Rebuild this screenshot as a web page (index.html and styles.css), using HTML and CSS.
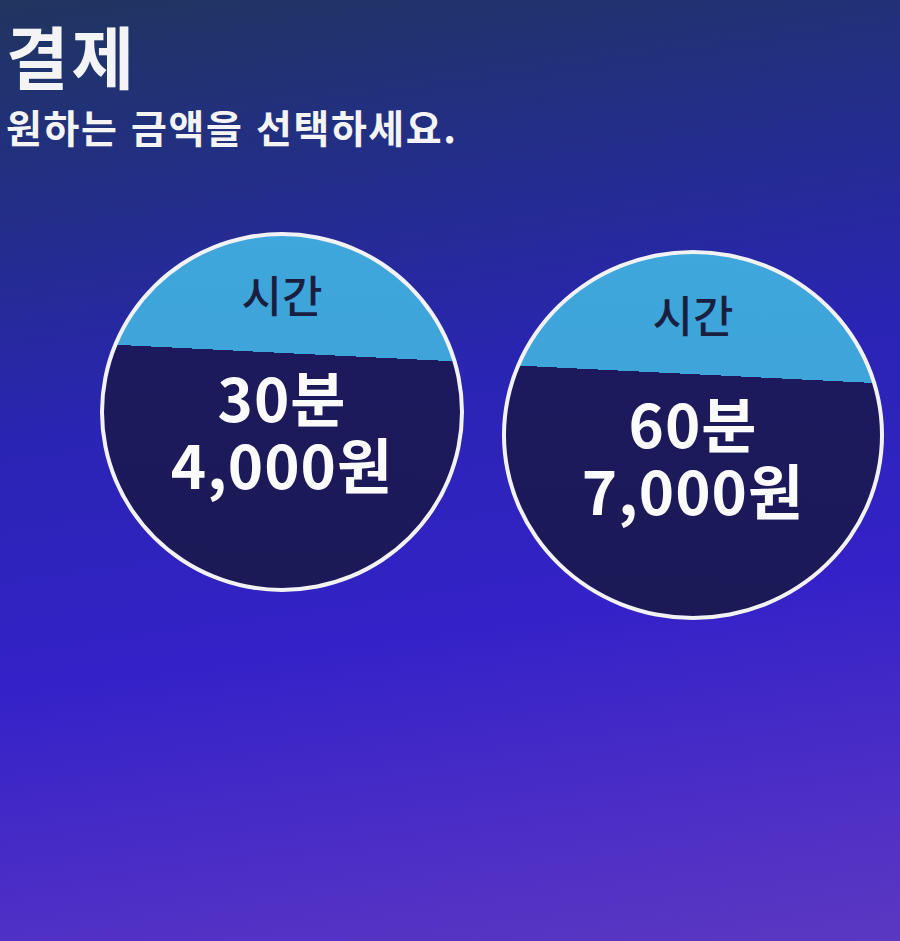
FILE: index.html
```html
<!DOCTYPE html>
<html lang="ko">
<head>
<meta charset="utf-8">
<title>결제</title>
<link rel="stylesheet" href="styles.css">
</head>
<body>
<main class="screen">
  <header class="head">
    <h1 class="title">결제</h1>
    <p class="subtitle">원하는 금액을 선택하세요.</p>
  </header>
  <section class="options">
    <button class="option option--a" type="button">
      <span class="option-top">시간</span>
      <span class="option-body">
        <span class="option-line">30분</span>
        <span class="option-line">4,000원</span>
      </span>
    </button>
    <button class="option option--b" type="button">
      <span class="option-top">시간</span>
      <span class="option-body">
        <span class="option-line">60분</span>
        <span class="option-line">7,000원</span>
      </span>
    </button>
  </section>
</main>
</body>
</html>
```
FILE: styles.css
```css
html, body {
  margin: 0;
  padding: 0;
  height: 100%;
}
body {
  font-family: "Noto Sans CJK KR", "Noto Sans", sans-serif;
  background: linear-gradient(172deg, #20355f 0%, #222f84 18%, #2a24b4 42%, #3422c8 65%, #4d2ec6 85%, #5b38c2 100%);
  color: #fff;
  overflow: hidden;
}
.screen {
  height: 941px;
  display: flex;
  flex-direction: column;
}
.head {
  padding: 10px 0 0 6px;
}
.title {
  margin: 0;
  font-size: 68px;
  font-weight: 700;
  line-height: 90px;
  letter-spacing: 3px;
  color: #f4f4f6;
}
.subtitle {
  margin: 0;
  font-size: 39px;
  font-weight: 700;
  line-height: 52px;
  color: #f4f4f6;
  letter-spacing: 1.6px;
}
.options {
  display: flex;
  align-items: flex-start;
  gap: 38px;
  padding: 80px 0 0 100px;
}
.option {
  font: inherit;
  color: inherit;
  padding: 0;
  border: 4px solid #f2f2f6;
  border-radius: 50%;
  box-sizing: border-box;
  overflow: hidden;
  display: flex;
  flex-direction: column;
  align-items: center;
  cursor: pointer;
  background: linear-gradient(182.8deg, #3fa7dc 0%, #3ea4da 34%, #1c1a5c 34%, #1b1956 100%);
}
.option--a {
  width: 364px;
  height: 360px;
}
.option--b {
  width: 382px;
  height: 370px;
  margin-top: 18px;
}
.option-top {
  font-size: 44px;
  font-weight: 500;
  color: #1a1f40;
  line-height: 48px;
  margin-top: 34px;
}
.option-body {
  display: flex;
  flex-direction: column;
  align-items: center;
  margin-top: 44px;
}
.option--b .option-top {
  margin-top: 36px;
}
.option--b .option-body {
  margin-top: 50px;
}
.option-line {
  font-size: 60px;
  font-weight: 700;
  line-height: 67px;
  color: #fbfbfd;
  letter-spacing: 1px;
}
```
